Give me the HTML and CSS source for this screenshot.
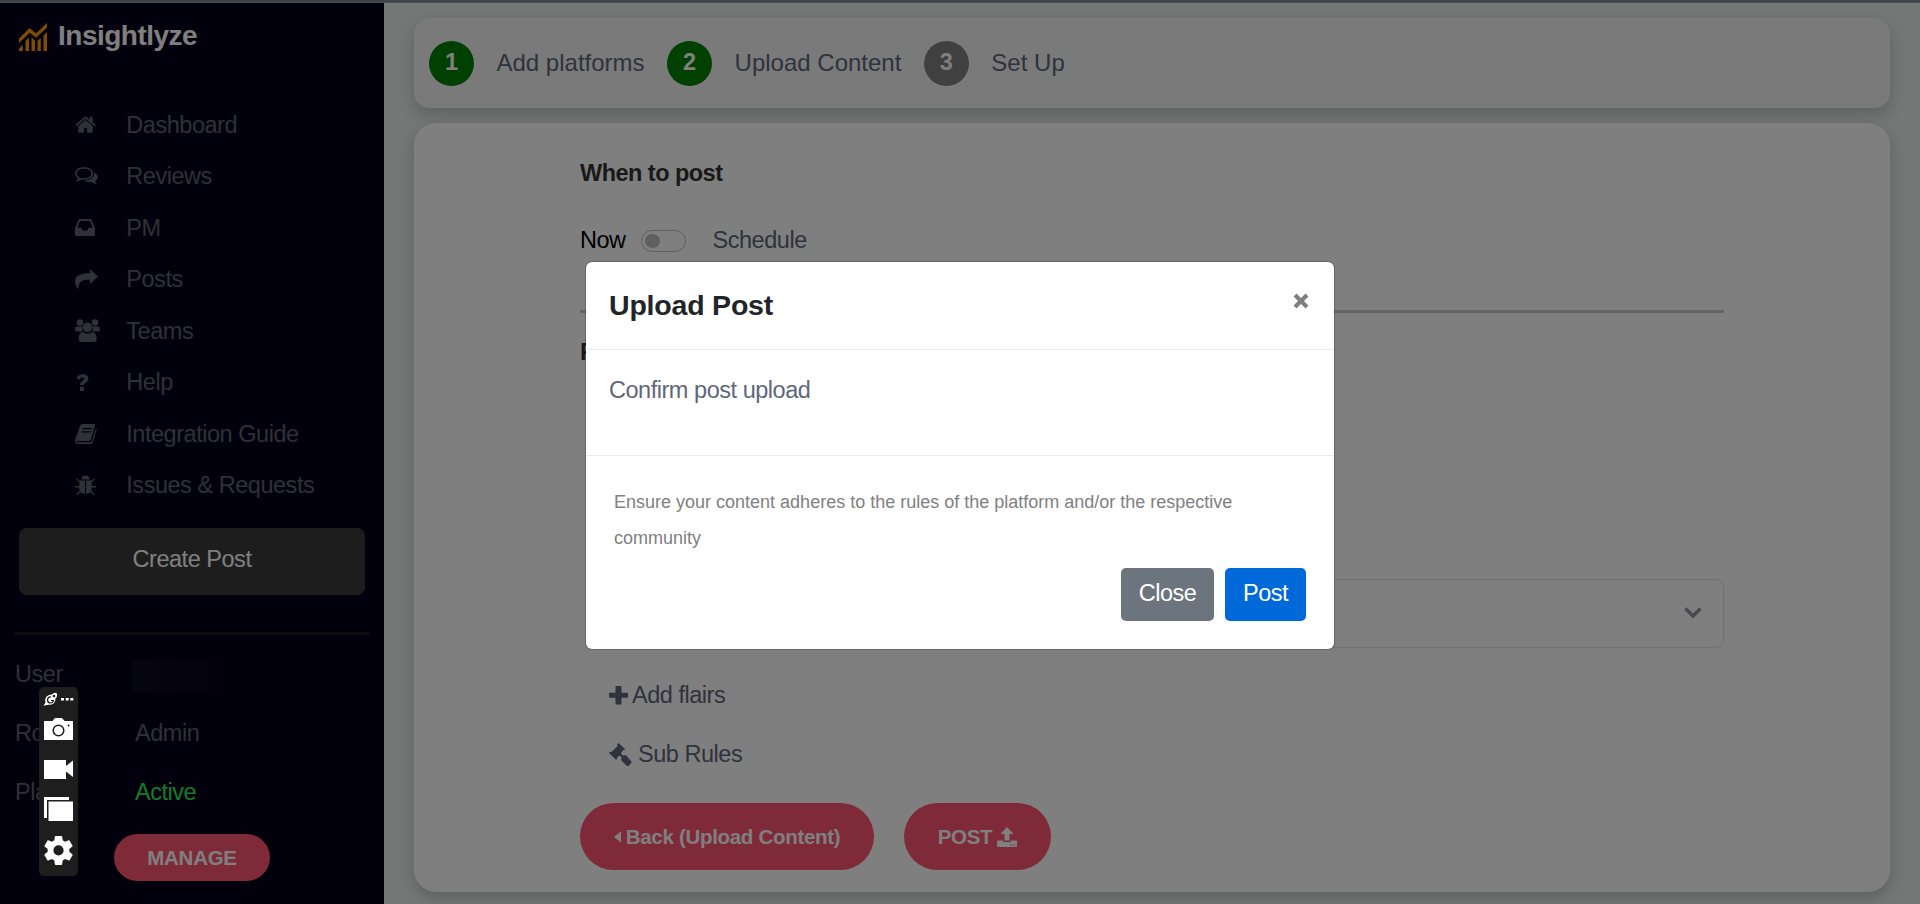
FILE: index.html
```html
<!DOCTYPE html>
<html lang="en">
<head>
<meta charset="utf-8">
<title>Insightlyze</title>
<link rel="stylesheet" href="styles.css">
</head>
<body>
<div class="app">
  <div class="topline"></div>
  <aside class="sidebar">
    <div class="brand">
      <svg class="brand-icon" viewBox="0 0 28 28"><path d="M0 15.500 10.500 5l6.500 5.500L28 0v4.500L17 14.800l-6.300-5L0 20zM0 28v-2.500L3.800 22v6zM6.500 28V18L10 14.500V28zM12.500 28V14.500L16 17.500V28zM18.500 28V18L21.800 15V28zM24.500 28V12.500L28 9v19z"/></svg>
      <span>Insightlyze</span>
    </div>
    <nav class="nav">
      <a class="nav-item"><svg viewBox="0 0 1664 1312" style="width:21px;height:17px"><path d="M1408 768v480q0 26-19 45t-45 19H960V928H704v384H320q-26 0-45-19t-19-45V768l576-475zm223-69-62 74q-8 9-21 11h-3q-13 0-21-7L832 200 140 777q-12 8-24 7-13-2-21-11l-62-74q-8-10-7-23.500t11-21.500L756 55q32-26 76-26t76 26l244 204V64q0-14 9-23t23-9h192q14 0 23 9t9 23v408l219 182q10 8 11 21.500t-7 23.500z"/></svg><span>Dashboard</span></a>
      <a class="nav-item"><svg viewBox="0 0 24 20" style="width:23px;height:20px"><path d="M9 1.500C4.500 1.500 1 4 1 7.300c0 2 1.200 3.600 3.200 4.600-.2 1-.8 2-1.500 2.700 1.900-.2 3.200-.9 4.200-1.800 6 1.200 11.100-1.600 11.100-5.500 0-3.300-4-5.800-9-5.800z" fill="none" stroke="currentColor" stroke-width="1.700"/><path d="M20.200 6c4.300 2.300 5 6.800.8 9.300.3 1.200 1 2 1.800 3-2.300 0-4-.8-5.300-2-3 .5-6 0-8-1.300C15.500 15 20.500 11.500 20.200 6z"/></svg><span>Reviews</span></a>
      <a class="nav-item"><svg viewBox="0 0 20 17" style="width:20px;height:17px"><path fill-rule="evenodd" d="M4.500 0h11q.8 0 1 .7L20 9v7q0 1-1 1H1q-1 0-1-1V9L3.500.7Q3.700 0 4.500 0zM5 2 2.500 8.700H6.300L7.600 11.500h4.800l1.300-2.800h3.800L15 2z"/></svg><span>PM</span></a>
      <a class="nav-item"><svg viewBox="0 0 23 21" style="width:23px;height:21px"><path d="M15 0l8 7.500-8 7.500v-4.300C8 10.500 3.500 11.500 3.200 20.500 1 17.500 0 15 0 12 .5 6 6 4.200 15 4.200z"/></svg><span>Posts</span></a>
      <a class="nav-item"><svg viewBox="0 0 25 23" style="width:25px;height:23px"><circle cx="5" cy="3.500" r="3.300"/><circle cx="20" cy="3.500" r="3.300"/><path d="M2 7.500h5.500c-.7 2-.3 3.700.5 5H2q-2 0-2-2c0-1.700.6-3 2-3zM23 7.500h-5.500c.7 2 .3 3.700-.5 5h6q2 0 2-2c0-1.700-.6-3-2-3z"/><circle cx="12.500" cy="8.300" r="4.800"/><path d="M8 13q4.500 3 9 0c3.500.3 4.700 3.500 4.700 7q0 3-3 3H6.700q-3 0-3-3c0-3.500 1-6.700 4.300-7z"/></svg><span>Teams</span></a>
      <a class="nav-item"><svg viewBox="0 0 14 17" style="width:14px;height:17px"><path d="M5 12.800h4V17H5zM1.500 4C3-1 13.500-1.500 13.500 5c0 3.500-4.500 3.600-4.500 6H5c0-4.500 4-4 4-6 0-2-3.500-2-4.700.8z"/></svg><span>Help</span></a>
      <a class="nav-item"><svg viewBox="0 0 22 20" style="width:22px;height:20px"><path fill-rule="evenodd" d="M7.500 0H19q1.500 0 1 1.800L16 15.500q-.5 1.500-2 1.500H2.500q-1.500 0-1 1.300H15q1.500 0 2-1.500L21 4q.8.500.5 1.800L18 18q-.6 2-2.500 2H3Q-.6 20 .1 16L5 2Q5.700 0 7.500 0zM8 4l-.5 1.300h9L17 4zM7 7.200l-.5 1.300h9l.5-1.300z"/></svg><span>Integration Guide</span></a>
      <a class="nav-item"><svg viewBox="0 0 21 20" style="width:21px;height:20px"><path d="M6.500 4.500a4 4 0 0 1 8 0z"/><path d="M4.500 5.500H10v13.300C5 18.500 4.200 16 4.200 12zM11 5.500h5.500l.3 6.500c0 4-.8 6.500-5.800 6.800z"/><path d="M5 7 1.500 3.700M16 7l3.500-3.300M0 11.700h5M16 11.700h5M5.500 16l-4 4M15.500 16l4 4" stroke="currentColor" stroke-width="1.500"/></svg><span>Issues &amp; Requests</span></a>
    </nav>
    <button class="create">Create Post</button>
    <div class="side-rule"></div>
    <dl class="account">
      <dt>User</dt><dd><span class="masked"></span></dd>
      <dt>Role</dt><dd>Admin</dd>
      <dt>Plan</dt><dd class="active">Active</dd>
    </dl>
    <button class="pill manage">MANAGE</button>
  </aside>
  <main class="main">
    <section class="steps">
      <span class="num done">1</span><span>Add platforms</span>
      <span class="num done">2</span><span>Upload Content</span>
      <span class="num">3</span><span>Set Up</span>
    </section>
    <section class="panel">
      <h2 class="heading">When to post</h2>
      <div class="when"><span class="now">Now</span><span class="toggle"><i></i></span><span>Schedule</span></div>
      <div class="rule"></div>
      <h2 class="heading second">Platforms</h2>
      <div class="select"><svg viewBox="0 0 18 12"><path d="M1.500 1.500 9 9l7.500-7.500" fill="none" stroke="currentColor" stroke-width="3.600"/></svg></div>
      <div class="link"><svg viewBox="0 0 19 19" style="width:19px;height:19px"><path d="M7.200 0h4.600q.7 0 .7.700V6.700h5.800q.7 0 .7.700v3.700q0 .7-.7.700h-5.800v6q0 .7-.7.700H7.200q-.7 0-.7-.7v-6H.7q-.7 0-.7-.7V7.400q0-.7.700-.7h5.800V.7q0-.7.700-.7z"/></svg><span>Add flairs</span></div>
      <div class="link rules"><svg viewBox="0 0 23 23" style="width:23px;height:23px"><path d="M9.500 0 16 6l-.8 1.200-1-.2-2.200 3.500 2.500 2.300 1.200-.8q1 0 1.600.6l4.600 5.200q1 1.500 0 2.700l-1.800 2q-1.500 1-2.700 0l-5-5q-.7-1 0-2l.5-.8-2.400-2.300-2.500 2.300.2 1.300-1.200.7L0 10l1-1.200 1.500.2L8.500 3 8.300 1.200z"/></svg><span>Sub Rules</span></div>
      <div class="actions">
        <button class="pill back"><svg viewBox="0 0 8 13" style="width:7px;height:12px"><path d="M8 0v13L0 6.500z"/></svg>Back (Upload Content)</button>
        <button class="pill post">POST<svg viewBox="0 0 20 20" style="width:20px;height:20px"><path fill-rule="evenodd" d="M10 0l6.500 7h-4v6.500h-5V7h-4zM1 13.500h5.200V15h7.600v-1.500H19q1 0 1 1V19q0 1-1 1H1q-1 0-1-1v-4.500q0-1 1-1zm12.500 3.700v1.200h1.300v-1.200zm3 0v1.200h1.300v-1.200z"/></svg></button>
      </div>
    </section>
  </main>
</div>
<div class="backdrop"></div>
<div class="modal" role="dialog">
  <header class="modal-head"><h5>Upload Post</h5><svg viewBox="0 0 16 16"><path d="M2 2l12 12M14 2 2 14" stroke="currentColor" stroke-width="4.200"/></svg></header>
  <div class="modal-body">Confirm post upload</div>
  <footer class="modal-foot">
    <p>Ensure your content adheres to the rules of the platform and/or the respective community</p>
    <div class="modal-actions"><button class="btn">Close</button><button class="btn primary">Post</button></div>
  </footer>
</div>
<div class="recorder">
  <svg viewBox="0 0 39 189"><g fill="#fff"><path d="M4.500 18.700 6.500 15.500q-1.500-5.500 3.500-7.500l3-.5Q15 5 17.800 6.300q1 3.200-1.300 5.200Q16.500 18 9.500 17.800z"/><path d="M22 11h3v2.500h-3zM26.700 11h3v2.500h-3zM31.300 11h3v2.500h-3z"/><path d="M5 34h8.500l2.500-3h7l2.500 3H34v19H5zM5 73h22v6l7-5.500V90l-7-5.500V92H5zM5 110h25v3H8v18H5z"/><path d="M9.500 114.500H34V134H9.500z"/></g><path d="M12 10a3 3 0 1 0 2.500 3.500H12" fill="none" stroke="#1e1e1e" stroke-width="1.200"/><circle cx="15" cy="9" r="1.300" fill="#1e1e1e"/><circle cx="19.500" cy="43.500" r="5.300" fill="none" stroke="#1e1e1e" stroke-width="1.500"/><circle cx="29.500" cy="38.500" r="1" fill="#1e1e1e"/><path transform="translate(2.100 146) scale(1.450)" fill="#fff" d="M19.430 12.980c.04-.32.070-.64.070-.98s-.03-.66-.07-.98l2.110-1.650c.19-.15.24-.42.120-.64l-2-3.460c-.12-.22-.39-.3-.61-.22l-2.490 1c-.52-.4-1.080-.73-1.690-.98l-.38-2.650C14.460 2.180 14.250 2 14 2h-4c-.25 0-.46.180-.49.420l-.38 2.650c-.61.250-1.170.590-1.690.98l-2.490-1c-.23-.09-.49 0-.61.220l-2 3.460c-.13.220-.07.490.120.640l2.110 1.650c-.04.320-.07.650-.07.980s.03.660.070.980l-2.110 1.650c-.19.150-.24.420-.12.640l2 3.460c.12.220.39.300.61.220l2.490-1c.52.400 1.080.730 1.690.980l.38 2.650c.03.240.24.420.49.420h4c.25 0 .46-.18.490-.42l.38-2.650c.61-.25 1.170-.59 1.690-.98l2.490 1c.23.090.49 0 .61-.22l2-3.460c.12-.22.070-.49-.12-.64z"/><circle cx="19.500" cy="163.400" r="5.100" fill="#1e1e1e"/></svg>
</div>
</body>
</html>
```
FILE: styles.css
```css
* { box-sizing: border-box; }
body { margin: 0; height: 904px; overflow: hidden; font-family: "Liberation Sans", Arial, sans-serif; font-size: 23.5px; letter-spacing: -.47px; line-height: 30px; color: #5f667b; }
button { font-family: inherit; letter-spacing: inherit; border: 0; }
h2, h5, p, dl, dd { margin: 0; }
svg { display: block; flex: none; fill: currentColor; }

.app { display: grid; grid-template: 3px 901px / 384px 1fr; width: 1920px; height: 904px; background: #e6f0ed; }
.topline { grid-column: 1 / 3; background: #768a90; border-bottom: 1px solid #9a9a9e; }

.sidebar { background: #06001a; color: #5c626d; display: flex; flex-direction: column; }
.brand { display: flex; align-items: center; gap: 11px; height: 94px; padding: 0 0 28px 19px; color: #fff; font-size: 28px; letter-spacing: -.5px; font-weight: 700; }
.brand-icon { width: 28px; height: 28px; margin-top: 1px; color: #fe9800; }
.nav { display: flex; flex-direction: column; padding: 2px 0 0 75px; }
.nav-item { display: grid; grid-template-columns: 51.300px 1fr; align-items: center; height: 51.500px; }
.create { margin: 17px 19px 0; height: 67px; flex: none; border-radius: 8px; background: #3a3a3a; color: #fff; font-size: 23.500px; padding: 0 0 4px; }
.side-rule { height: 3px; flex: none; margin: 37px 15px 0; background: #181826; }
.account { display: grid; grid-template-columns: 120px 1fr; grid-auto-rows: 59px; align-items: center; padding: 9px 0 0 15px; }
.masked { display: block; width: 110px; height: 32px; margin: 5px 0 0 -3px; background: linear-gradient(90deg, #0b0a20, #06001a); }
.active { color: #2bf655; }
.pill { display: flex; align-items: center; justify-content: center; background: #fe5472; color: #fff; font-size: 20.500px; letter-spacing: -.3px; font-weight: 700; padding: 0; border-radius: 34px; }
.manage { width: 156px; height: 47px; flex: none; margin: 13px 0 0 114px; }

.main { display: flex; flex-direction: column; gap: 15px; padding: 15px 30px 12px; }
.steps { display: flex; align-items: center; gap: 22.500px; height: 90px; flex: none; padding: 0 15px; border-radius: 15px; background: #f5f5f5; box-shadow: 0 6px 15px rgba(0,0,0,.2); font-size: 24px; letter-spacing: 0; }
.num { width: 45px; height: 45px; border-radius: 50%; background: #808080; color: #fff; font-size: 23.500px; font-weight: 700; line-height: 42px; text-align: center; }
.num.done { background: #008000; }
.panel { flex: none; height: 769px; padding: 35px 166px 0; border-radius: 22px; background: #fff; box-shadow: 0 6px 15px rgba(0,0,0,.2); }
.heading { font-size: 23.500px; letter-spacing: -.53px; line-height: 30px; color: #333; }
.when { display: flex; align-items: center; margin-top: 37px; height: 30px; }
.now { color: #000; width: 61px; }
.toggle { width: 45px; height: 22px; margin: 2px 26.500px 0 0; padding: 3px 3px; border: 1px solid #bfbfbf; border-radius: 11px; }
.toggle i { display: block; width: 15px; height: 14px; border-radius: 50%; background: #bfbfbf; }
.rule { height: 3px; margin: 55px 0 0; background: #ccc; }
.second { margin-top: 24px; }
.select { display: flex; align-items: center; justify-content: flex-end; margin: 212px 0 0 29px; height: 69px; padding: 0 21px 2px 0; border: 1px solid #e0e0e0; border-radius: 8px; color: #90959f; }
.select svg { width: 18px; height: 12px; }
.link { display: flex; align-items: center; gap: 4px; height: 30px; margin: 32px 0 0 29px; }
.rules { margin-top: 29px; gap: 6px; }
.actions { display: flex; gap: 30px; margin-top: 34px; }
.actions .pill { height: 67px; gap: 5px; }
.back { width: 294px; }
.post { width: 147px; }

.backdrop { position: absolute; inset: 0; background: rgba(0,0,0,.5); }
.modal { position: absolute; left: 585px; top: 261px; width: 750px; height: 389px; background: #fff; background-clip: padding-box; border: 1px solid rgba(0,0,0,.2); border-radius: 7px; overflow: hidden; }
.modal-head { display: flex; justify-content: space-between; height: 88px; padding: 26px 25px 0 23px; border-bottom: 1px solid #e9ecef; color: #212529; }
.modal-head h5 { font-size: 28.500px; letter-spacing: -.2px; line-height: 34px; }
.modal-head svg { width: 16px; height: 16px; margin-top: 5px; color: #7f7f7f; }
.modal-body { height: 106px; padding: 25px 23px; border-bottom: 1px solid #e9ecef; }
.modal-foot { padding: 28px 28px 0; color: #808080; }
.modal-foot p { font-size: 18px; letter-spacing: 0; line-height: 36px; width: 680px; }
.modal-actions { display: flex; justify-content: flex-end; gap: 11px; margin-top: 12px; }
.btn { width: 93px; height: 53px; padding: 0 0 3px; border-radius: 5px; background: #6c757d; color: #fff; font-size: 23.500px; }
.btn.primary { width: 81px; background: #0069d9; }

.recorder { position: absolute; left: 39px; top: 687px; width: 39px; height: 189px; border-radius: 5px; background: #1e1e1e; }
```
